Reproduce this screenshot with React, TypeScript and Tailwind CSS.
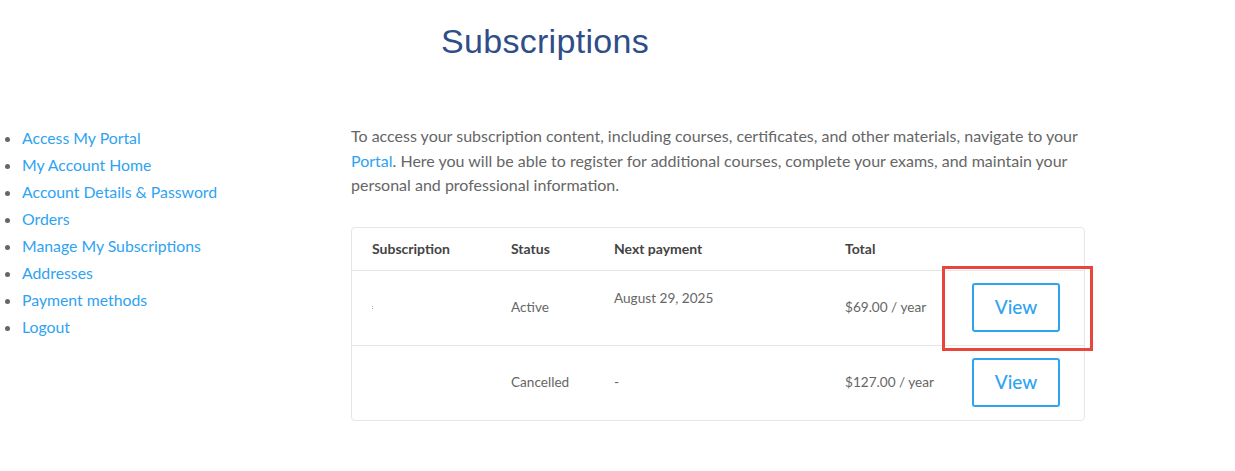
import React from "react";

const links = [
  "Access My Portal",
  "My Account Home",
  "Account Details & Password",
  "Orders",
  "Manage My Subscriptions",
  "Addresses",
  "Payment methods",
  "Logout",
];

const cols = "grid-cols-[139px_103px_231px_127px_1fr]";

function ViewButton() {
  return (
    <a
      href="#"
      className="flex h-[49px] w-[88px] items-center justify-center rounded-[3px] border-2 border-[#2ea3f2] text-[19px] font-medium text-[#2ea3f2]"
    >
      View
    </a>
  );
}

export default function App() {
  return (
    <div
      className="relative min-h-[471px] w-[1235px] bg-white"
      style={{ fontFamily: "Lato, 'Liberation Sans', sans-serif" }}
    >
      <div className="w-[1090px] pt-[17px] text-center">
        <h1
          className="text-[34px] leading-[48px] tracking-[0.3px] text-[#2f4d88]"
          style={{ fontFamily: "'Liberation Sans', sans-serif" }}
        >
          Subscriptions
        </h1>
      </div>
      <div className="mt-[59px] flex">
        <ul className="w-[351px] list-disc pl-[22px] text-[15.8px] leading-[27px] text-[#2ea3f2] marker:text-[#666]">
          {links.map((l) => (
            <li key={l}>
              <a href="#">{l}</a>
            </li>
          ))}
        </ul>
        <div className="w-[734px]">
          <p className="text-[16px] leading-[24.5px] text-[#666]">
            To access your subscription content, including courses, certificates, and other materials, navigate to your{" "}
            <a href="#" className="text-[#2ea3f2]">Portal</a>. Here you will be able to register for additional courses,
            complete your exams, and maintain your personal and professional information.
          </p>
          <div className="relative mt-[29px] rounded-[4px] border border-[#e6e6e6]">
            <div className={`grid h-[43px] ${cols} items-center border-b border-[#e6e6e6] pl-[20px] text-[14px] font-bold text-[#444]`}>
              <div>Subscription</div>
              <div>Status</div>
              <div>Next payment</div>
              <div>Total</div>
              <div></div>
            </div>
            <div className={`grid h-[75px] ${cols} items-center border-b border-[#e6e6e6] pl-[20px] text-[13.6px] text-[#666]`}>
              <div>
                <span className="block h-[3px] w-[1px] border-y border-[#2ea3f2] opacity-70"></span>
              </div>
              <div>Active</div>
              <div className="self-start pt-[17px]">August 29, 2025</div>
              <div>$69.00 / year</div>
              <div>
                <ViewButton />
              </div>
            </div>
            <div className={`grid h-[74px] ${cols} items-center pl-[20px] text-[13.6px] text-[#666]`}>
              <div></div>
              <div>Cancelled</div>
              <div>-</div>
              <div>$127.00 / year</div>
              <div>
                <ViewButton />
              </div>
            </div>
            <div className="pointer-events-none absolute left-[590px] top-[38px] h-[85px] w-[151px] border-[3px] border-[#e8453c]"></div>
          </div>
        </div>
      </div>
    </div>
  );
}
